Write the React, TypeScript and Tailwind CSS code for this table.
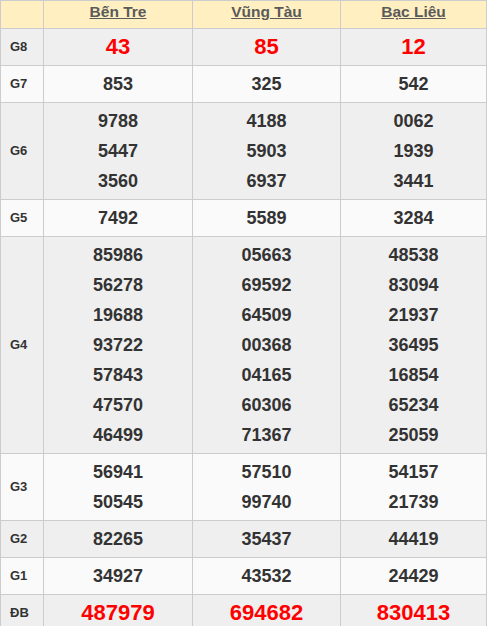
const provinces = ['Bến Tre', 'Vũng Tàu', 'Bạc Liêu']

type Prize = {
  label: string
  values: string[][]
  big?: boolean
}

const prizes: Prize[] = [
  { label: 'G8', values: [['43'], ['85'], ['12']], big: true },
  { label: 'G7', values: [['853'], ['325'], ['542']] },
  {
    label: 'G6',
    values: [
      ['9788', '5447', '3560'],
      ['4188', '5903', '6937'],
      ['0062', '1939', '3441'],
    ],
  },
  { label: 'G5', values: [['7492'], ['5589'], ['3284']] },
  {
    label: 'G4',
    values: [
      ['85986', '56278', '19688', '93722', '57843', '47570', '46499'],
      ['05663', '69592', '64509', '00368', '04165', '60306', '71367'],
      ['48538', '83094', '21937', '36495', '16854', '65234', '25059'],
    ],
  },
  {
    label: 'G3',
    values: [
      ['56941', '50545'],
      ['57510', '99740'],
      ['54157', '21739'],
    ],
  },
  { label: 'G2', values: [['82265'], ['35437'], ['44419']] },
  { label: 'G1', values: [['34927'], ['43532'], ['24429']] },
  { label: 'ĐB', values: [['487979'], ['694682'], ['830413']], big: true },
]

export default function App() {
  return (
    <div className="w-[487px] bg-white font-['Liberation_Sans',Arial,sans-serif]">
      <table className="w-[487px] table-fixed border-collapse border border-[#cccccc]">
        <colgroup>
          <col className="w-[43px]" />
          <col className="w-[149px]" />
          <col className="w-[148px]" />
          <col />
        </colgroup>
        <thead>
          <tr className="bg-[#ffefc1]">
            <th className="h-[28px] border border-[#cccccc] p-0" />
            {provinces.map((p) => (
              <th
                key={p}
                className="h-[28px] border border-[#cccccc] p-0 pt-[1px] text-center align-top text-[15.5px] leading-[20px] font-bold text-[#5a5a5a] underline"
              >
                {p}
              </th>
            ))}
          </tr>
        </thead>
        <tbody>
          {prizes.map((row, i) => (
            <tr key={row.label} className={i % 2 === 0 ? 'bg-[#efefef]' : 'bg-[#fafafa]'}>
              <td className="border border-[#cccccc] pl-[9px] text-[13px] font-bold text-[#333333]">
                {row.label}
              </td>
              {row.values.map((col, j) => (
                <td key={j} className="border border-[#cccccc] py-[3px] text-center align-middle">
                  {col.map((v) => (
                    <div
                      key={v}
                      className={
                        row.big
                          ? 'h-[30px] leading-[30px] text-[22px] font-bold text-[#ff0000]'
                          : 'h-[30px] leading-[30px] text-[18px] font-bold text-[#333333]'
                      }
                    >
                      {v}
                    </div>
                  ))}
                </td>
              ))}
            </tr>
          ))}
        </tbody>
      </table>
    </div>
  )
}
